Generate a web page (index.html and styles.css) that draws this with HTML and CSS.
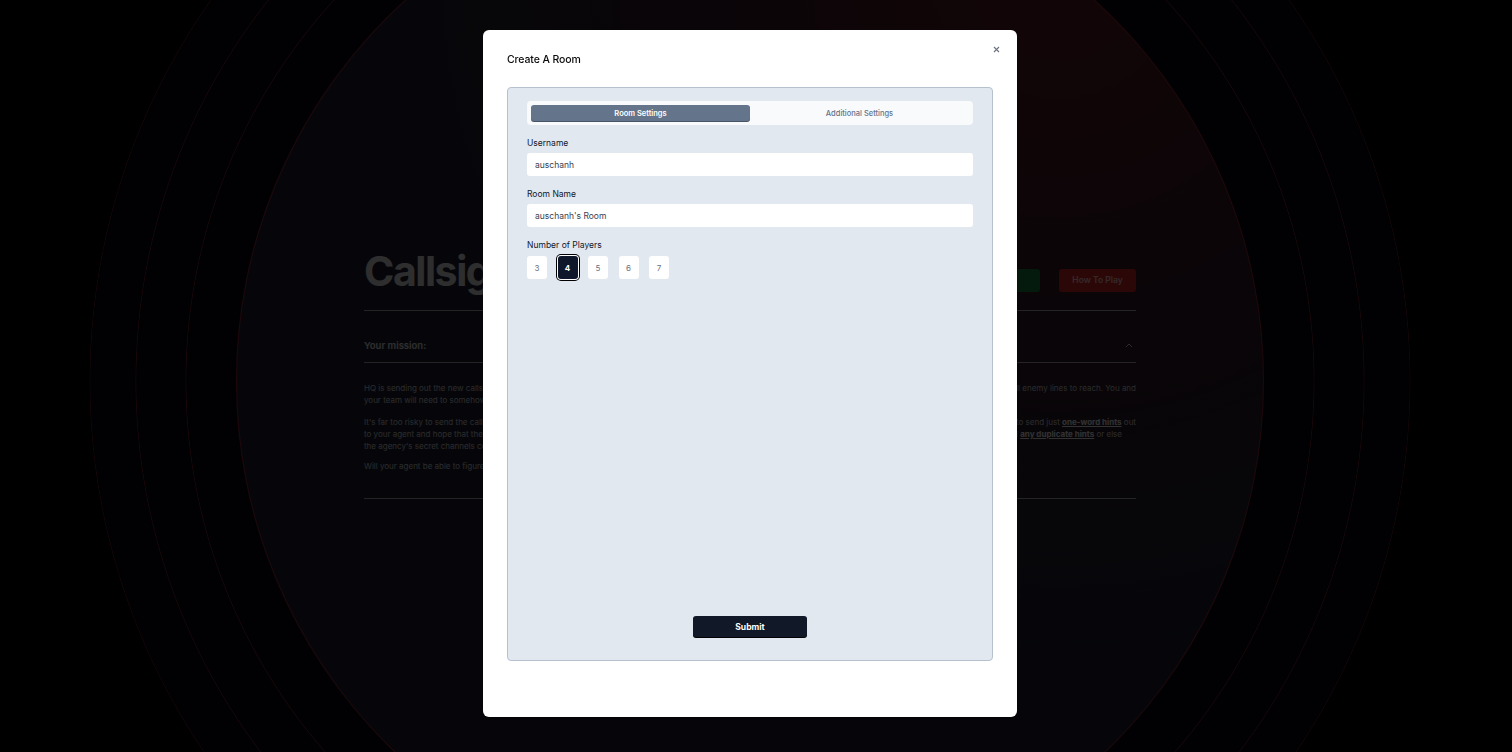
FILE: index.html
```html
<!DOCTYPE html>
<html lang="en">
<head>
<meta charset="utf-8">
<title>Callsign</title>
<link rel="stylesheet" href="styles.css">
</head>
<body>
<div class="page">
  <div class="halo"></div>
  <main class="content">
    <div class="hero">
      <h1 class="title">Callsign</h1>
      <div class="actions">
        <button class="btn btn-green">Create A Room</button>
        <button class="btn btn-red">How To Play</button>
      </div>
    </div>
    <section class="accordion">
      <div class="acc-head">
        <span>Your mission:</span>
        <svg class="chev" width="8" height="5" viewBox="0 0 8 5"><path d="M1 4 L4 1 L7 4" fill="none" stroke="currentColor" stroke-width="1"/></svg>
      </div>
      <div class="acc-body">
        <p>
          <span class="ln"><span>HQ is sending out the new callsigns to our field agents, but they're</span><span>stationed beyond all enemy lines to reach. You and</span></span>
          <span class="ln"><span>your team will need to somehow get the new callsign to your agent.</span></span>
        </p>
        <p>
          <span class="ln"><span>It's far too risky to send the callsign directly, so the agency will allow you</span><span>to send just <b>one-word hints</b> out</span></span>
          <span class="ln"><span>to your agent and hope that they can guess it. Just make sure you don't</span><span>send <b>any duplicate hints</b> or else</span></span>
          <span class="ln"><span>the agency's secret channels could be compromised.</span></span>
        </p>
        <p>
          <span class="ln"><span>Will your agent be able to figure out the callsign?</span></span>
        </p>
      </div>
    </section>
  </main>
</div>

<div class="overlay">
  <div class="modal">
    <div class="modal-head">
      <h2>Create A Room</h2>
      <button class="close" aria-label="Close">
        <svg width="7" height="7" viewBox="0 0 7 7"><path d="M1 1 L6 6 M6 1 L1 6" stroke="currentColor" stroke-width="1.1" fill="none"/></svg>
      </button>
    </div>
    <div class="panel">
      <div class="tabs">
        <button class="tab active">Room Settings</button>
        <button class="tab">Additional Settings</button>
      </div>
      <div class="field">
        <label>Username</label>
        <div class="input">auschanh</div>
      </div>
      <div class="field">
        <label>Room Name</label>
        <div class="input">auschanh's Room</div>
      </div>
      <div class="field">
        <label>Number of Players</label>
        <div class="players">
          <button class="pl">3</button>
          <button class="pl active">4</button>
          <button class="pl">5</button>
          <button class="pl">6</button>
          <button class="pl">7</button>
        </div>
      </div>
      <div class="spacer"></div>
      <button class="submit">Submit</button>
    </div>
  </div>
</div>
</body>
</html>
```

FILE: styles.css
```css
* { box-sizing: border-box; }
html, body { margin: 0; padding: 0; }
body {
  background: #000;
  font-family: Inter, "Noto Sans", sans-serif;
  overflow: hidden;
  width: 1512px;
  height: 752px;
}
button { font-family: inherit; border: 0; cursor: pointer; }

.page {
  position: relative;
  width: 1500px;
  height: 752px;
  overflow: hidden;
  display: flex;
  align-items: center;
  justify-content: center;
  background:
    radial-gradient(circle at 750px 381px, transparent 563.4px, rgba(160,40,55,.8) 564px, transparent 564.8px),
    radial-gradient(circle at 750px 381px, transparent 613.4px, rgba(160,40,55,.75) 614px, transparent 614.8px),
    radial-gradient(circle at 750px 381px, transparent 659.4px, rgba(160,40,55,.6) 660px, transparent 660.8px),
    radial-gradient(circle at 750px 381px, #070914 0, #070914 660px, #000 660.5px);
}
.halo {
  position: absolute;
  left: 236px;
  top: -133px;
  width: 1028px;
  height: 1028px;
  border-radius: 50%;
  border: 1px solid rgba(170,40,55,.85);
  background:
    radial-gradient(circle at 80% 10%, rgba(110,25,30,.8) 0, rgba(70,20,30,.45) 30%, transparent 55%),
    #1f2234;
}

.content {
  position: relative;
  width: 772px;
  color: #d4d4d8;
  margin-top: -3px;
}
.hero {
  display: flex;
  justify-content: space-between;
  align-items: flex-end;
  padding-bottom: 18px;
  border-bottom: 1px solid #b4b4bb;
}
.title {
  margin: 0;
  font-size: 41px;
  line-height: 1;
  font-weight: 700;
  letter-spacing: -0.035em;
  color: #e4e4e7;
}
.actions { display: flex; gap: 19px; }
.btn {
  height: 23px;
  padding: 0 14px;
  border-radius: 3px;
  font-size: 8.5px;
  font-weight: 600;
}
.btn-green { background: #15803d; color: #dcfce7; width: 124px; }
.btn-red { background: #dc2626; color: #fecaca; width: 77px; padding: 0; }

.accordion { margin-top: 19px; border-bottom: 1px solid #b4b4bb; }
.acc-head {
  display: flex;
  justify-content: space-between;
  align-items: center;
  height: 33px;
  font-size: 9.5px;
  font-weight: 600;
  color: #e4e4e7;
  border-bottom: 1px solid #b4b4bb;
  padding-right: 3px;
}
.chev { color: #d4d4d8; }
.acc-body { padding: 19px 0 26px; }
.acc-body p { margin: 0 0 10px; font-size: 8px; line-height: 12px; }
.acc-body p:nth-child(2) { margin-bottom: 8px; }
.acc-body p:last-child { margin-bottom: 0; }
.ln { display: flex; justify-content: space-between; white-space: nowrap; }
.ln b { text-decoration: underline; font-weight: 700; color: #f4f4f5; }
.ln:nth-child(2) > span:last-child:not(:first-child) { margin-right: 14px; }

.overlay {
  position: fixed;
  top: 0;
  left: 0;
  width: 1500px;
  height: 752px;
  background: rgba(0,0,0,.8);
  display: flex;
  justify-content: center;
  align-items: flex-start;
  padding-top: 30px;
}
.modal {
  width: 534px;
  height: 687px;
  background: #fff;
  border-radius: 6px;
  padding: 23px 24px 56px;
  display: flex;
  flex-direction: column;
  box-shadow: 0 1px 2px rgba(0,0,0,.6);
}
.modal-head {
  position: relative;
  height: 34px;
}
.modal-head h2 {
  margin: 0;
  font-size: 10.5px;
  line-height: 13px;
  font-weight: 500;
  letter-spacing: -0.01em;
  color: #0a0a0a;
}
.close {
  position: absolute;
  right: -9px;
  top: -9px;
  background: none;
  padding: 2px;
  color: #6b7280;
  line-height: 0;
}
.panel {
  flex: 1;
  background: #e2e8f0;
  border: 1px solid #b7c1ce;
  border-radius: 4px;
  padding: 13px 19px 23px;
  display: flex;
  flex-direction: column;
}
.tabs {
  display: grid;
  grid-template-columns: 1fr 1fr;
  background: #f8fafc;
  border-radius: 4px;
  padding: 4px;
  height: 24px;
}
.tab {
  background: transparent;
  font-size: 7.5px;
  font-weight: 500;
  color: #64748b;
  border-radius: 3px;
  height: 16px;
  padding: 0;
}
.tab.active {
  background: #64748b;
  color: #fff;
  font-weight: 600;
  box-shadow: 0 1px 0 #475569;
}
.field { margin-top: 13px; display: flex; flex-direction: column; }
.field:first-of-type { margin-top: 12px; }
.field label {
  font-size: 8.5px;
  line-height: 11px;
  color: #0f172a;
  margin-bottom: 4px;
}
.input {
  height: 23px;
  background: #fff;
  border-radius: 3px;
  padding: 0 8px;
  display: flex;
  align-items: center;
  font-size: 8.5px;
  color: #374151;
}
.players { display: flex; gap: 10.5px; margin-top: 1px; }
.pl {
  width: 20px;
  height: 23px;
  background: #fff;
  border-radius: 3px;
  font-size: 8px;
  color: #6b7280;
  padding: 0;
}
.pl.active {
  background: #0f172a;
  color: #fff;
  font-weight: 700;
  box-shadow: 0 0 0 1px #fff, 0 0 0 2px #000;
}
.spacer { flex: 1; }
.submit {
  align-self: center;
  width: 114px;
  height: 21px;
  background: #111827;
  color: #fff;
  font-size: 8.5px;
  font-weight: 700;
  border-radius: 3px;
  box-shadow: 0 1px 0 #000;
}
```
